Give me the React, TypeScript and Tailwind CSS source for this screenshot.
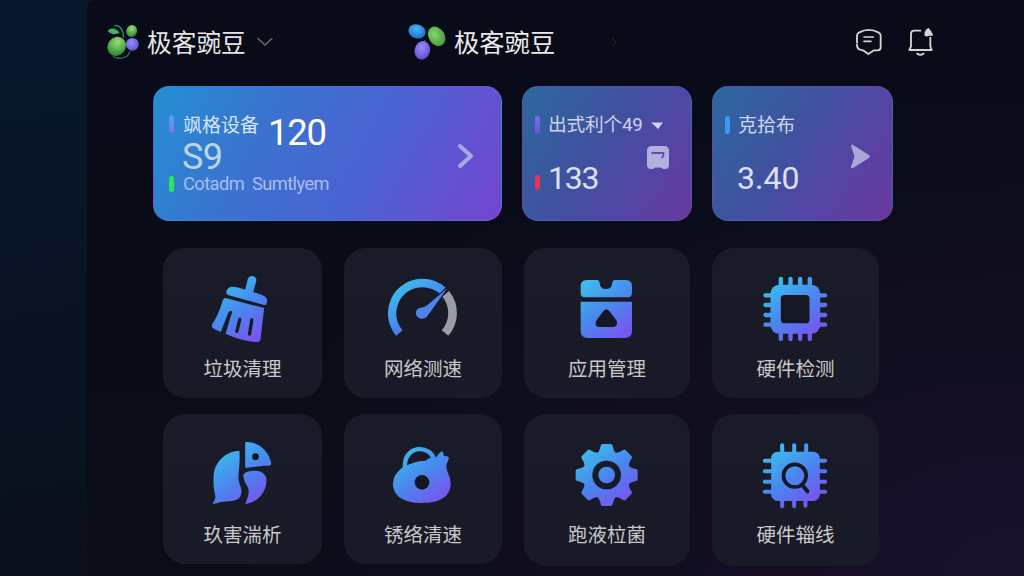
import type { ReactNode } from "react";

const CJK = "font-['Noto_Sans_CJK_SC',sans-serif]";
const NUM = "font-[Roboto,'Noto_Sans_CJK_SC',sans-serif]";

function BerryLogo() {
  return (
    <svg width="34" height="38" viewBox="51 38 102 114" fill="none">
      <defs>
        <radialGradient id="berry-green" cx="0.4" cy="0.3" r="0.75">
          <stop offset="0" stopColor="#9bdc7c" />
          <stop offset="0.5" stopColor="#5cb54e" />
          <stop offset="1" stopColor="#2d7a31" />
        </radialGradient>
        <radialGradient id="berry-violet" cx="0.4" cy="0.35" r="0.75">
          <stop offset="0" stopColor="#918fff" />
          <stop offset="1" stopColor="#5f4fd4" />
        </radialGradient>
      </defs>
      <path d="M76 45C92 44 102 56 104 82" stroke="#2c8f63" strokeWidth="4" />
      <path d="M72 138C92 150 121 142 122 122" stroke="#24705f" strokeWidth="4" />
      <path d="M56 62C62 50 84 52 92 68C79 74 64 72 56 62Z" fill="#3cb85c" />
      <ellipse cx="128" cy="62" rx="16" ry="18" transform="rotate(24 128 62)" fill="url(#berry-green)" />
      <ellipse cx="83" cy="108" rx="27" ry="30" transform="rotate(35 83 108)" fill="url(#berry-green)" />
      <ellipse cx="130" cy="102" rx="19" ry="19" fill="url(#berry-violet)" />
    </svg>
  );
}

function BeanLogo() {
  return (
    <svg width="40" height="38" viewBox="50 40 120 114" fill="none">
      <defs>
        <radialGradient id="bean-blue" cx="0.4" cy="0.35" r="0.75">
          <stop offset="0" stopColor="#4bb4fb" />
          <stop offset="1" stopColor="#156bc4" />
        </radialGradient>
        <radialGradient id="bean-green" cx="0.45" cy="0.35" r="0.75">
          <stop offset="0" stopColor="#8ad66e" />
          <stop offset="1" stopColor="#379338" />
        </radialGradient>
        <radialGradient id="bean-violet" cx="0.4" cy="0.35" r="0.75">
          <stop offset="0" stopColor="#9b8bff" />
          <stop offset="1" stopColor="#5547cf" />
        </radialGradient>
      </defs>
      <path d="M104 91L102 102" stroke="#2a5b78" strokeWidth="4" />
      <ellipse cx="80" cy="65" rx="26" ry="21" transform="rotate(18 80 65)" fill="url(#bean-blue)" />
      <ellipse cx="139" cy="80" rx="24" ry="31" transform="rotate(-32 139 80)" fill="url(#bean-green)" />
      <ellipse cx="96" cy="122" rx="23" ry="28" transform="rotate(14 96 122)" fill="url(#bean-violet)" />
    </svg>
  );
}

function MessageIcon() {
  return (
    <svg width="28" height="28" viewBox="77 54 84 84" fill="none" stroke="#d6d4d3" strokeWidth="5.5" strokeLinecap="round" strokeLinejoin="round">
      <path d="M83 98V77Q83 70 90 67Q118 52 147 67Q154 70 154 77V112Q154 121 145 121H134L117 132L103 122L90 118Q83 115 83 104" />
      <path d="M104 81H132M104 94H125" strokeWidth="5" />
    </svg>
  );
}

function BellIcon() {
  return (
    <svg width="28" height="30" viewBox="230 50 84 90" fill="none" stroke="#d6d4d3" strokeWidth="5.5" strokeLinecap="round" strokeLinejoin="round">
      <path d="M270 61H252Q242 61 242 71V108L237 119H304L300 108V82" />
      <path d="M261 130Q270 137 279 130" strokeWidth="6" />
      <path d="M294 55Q300 60 306 74L295 74L289 77L284 74Q284 62 294 55Z" fill="#d6d4d3" strokeWidth="4" />
    </svg>
  );
}

function ToolIcon({ id, x, y, children }: { id: string; x: number; y: number; children: ReactNode }) {
  return (
    <svg width="72" height="72" viewBox={`${x} ${y} 216 216`} fill={`url(#${id})`} className="shrink-0">
      <defs>
        <linearGradient id={id} gradientUnits="userSpaceOnUse" x1={x + 45} y1={y + 25} x2={x + 165} y2={y + 190}>
          <stop offset="0" stopColor="#3cbcec" />
          <stop offset="0.5" stopColor="#4a86ee" />
          <stop offset="1" stopColor="#7b52f0" />
        </linearGradient>
      </defs>
      {children}
    </svg>
  );
}

function BroomIcon() {
  return (
    <ToolIcon id="tool-broom" x={154.5} y={102}>
      <path d="M277 117Q280 107 291 108Q303 110 303 120L293 157Q321 163 331 172Q338 180 332 194Q326 197 318 193L220 166Q210 163 213 153Q217 141 229 140Q246 140 269 149Z" />
      <path d="M210 174L326 204L315 299Q313 307 302 306Q257 303 210 281L222 242Q228 222 230 217Q226 207 218 219L196 276L176 267Q165 261 171 251Q189 225 201 184Q204 174 210 174Z" />
      <path d="M253 238L244 274M289 240L282 282" stroke="#181b28" strokeWidth="10" strokeLinecap="round" />
    </ToolIcon>
  );
}

function GaugeIcon() {
  return (
    <ToolIcon id="tool-gauge" x={696} y={102}>
      <path d="M733 279A91 91 0 0 1 802 129A91 91 0 0 1 863 152" fill="none" stroke="url(#tool-gauge)" strokeWidth="25" />
      <path d="M872 161A91 91 0 0 1 870 279" fill="none" stroke="#9a9ca6" strokeWidth="26" />
      <path d="M877 145L815 231Q808 238 796 236Q781 231 783 216Q785 206 796 203Q808 203 818 195Z" stroke="#181b28" strokeWidth="6" paintOrder="stroke" />
    </ToolIcon>
  );
}

function AppBoxIcon() {
  return (
    <ToolIcon id="tool-box" x={168} y={102}>
      <path d="M216 120H247Q253 120 254 128Q255 147 273 147Q290 147 292 128Q293 120 299 120H332Q351 120 351 139V158Q351 172 337 172H211Q197 172 197 158V139Q197 120 216 120Z" />
      <path d="M197 185H351V273Q351 294 330 294H218Q197 294 197 273Z" />
      <path d="M266 212Q274 203 282 212L303 239Q310 250 302 258Q299 261 294 261H252Q244 261 242 254Q240 246 245 240Z" fill="#151824" />
    </ToolIcon>
  );
}

function ChipIcon() {
  return (
    <ToolIcon id="tool-chip" x={733.5} y={102}>
      <path
        d="M796 117V140M825 117V140M854 117V140M883 117V140M796 275V297M825 275V297M854 275V297M883 275V297M750 166H770M750 195H770M750 225H770M750 254H770M910 166H929M910 195H929M910 225H929M910 254H929"
        stroke="url(#tool-chip)"
        strokeWidth="13"
        strokeLinecap="round"
      />
      <rect x="765" y="134" width="149" height="147" rx="26" />
      <rect x="796" y="165" width="86" height="85" rx="11" fill="#151824" />
    </ToolIcon>
  );
}

function ParrotIcon() {
  return (
    <ToolIcon id="tool-parrot" x={154.5} y={105}>
      <path d="M252 138C215 137 175 168 174 218C173 252 179 267 180 277Q178 287 171 296Q182 297 194 291C215 287 244 294 255 273C264 253 251 242 249 222C249 196 254 180 252 138Z" />
      <path d="M271 111C310 110 342 140 347 175Q348 181 341 182C314 181 292 187 273 189Q269 189 269 184V115Q269 111 271 111Z" />
      <circle cx="300" cy="155" r="10" fill="#151824" />
      <path d="M264 217C260 203 277 197 300 197C323 197 335 213 333 230C330 266 304 292 269 297C277 276 285 260 275 243Q266 230 264 217Z" />
    </ToolIcon>
  );
}

function BagIcon() {
  return (
    <ToolIcon id="tool-bag" x={696} y={105}>
      <path d="M750 190V176A45 45 0 0 1 838 164" fill="none" stroke="url(#tool-bag)" strokeWidth="13" />
      <path d="M745 185C772 175 784 168 805 168Q815 168 818 163Q828 154 836 163Q845 158 851 147Q858 138 864 140Q865 148 867 153Q875 153 882 157Q880 168 874 180C874 203 887 211 887 238C885 281 845 294 803 294C751 294 714 276 714 236Q715 206 745 185Z" />
      <circle cx="801" cy="232" r="22" fill="#151824" />
    </ToolIcon>
  );
}

const GEAR_TEETH = [0, 45, 90, 135, 180, 225, 270, 315];

function GearIcon() {
  return (
    <ToolIcon id="tool-gear" x={168} y={105}>
      <mask id="gear-shape" maskUnits="userSpaceOnUse" x="168" y="105" width="216" height="216">
        <g fill="#fff">
          <circle cx="275" cy="210" r="72" />
          {GEAR_TEETH.map((deg) => (
            <path
              key={deg}
              d="M263 117H287Q292 117 293 122Q296 139 305 146L245 146Q254 139 257 122Q258 117 263 117Z"
              transform={`rotate(${deg} 275 210)`}
            />
          ))}
        </g>
        <circle cx="275" cy="210" r="34" fill="none" stroke="#000" strokeWidth="18" />
      </mask>
      <rect x="168" y="105" width="216" height="216" mask="url(#gear-shape)" />
    </ToolIcon>
  );
}

function ChipSearchIcon() {
  return (
    <ToolIcon id="tool-scan" x={733.5} y={105}>
      <path
        d="M800 121V145M836 121V145M872 121V145M800 285V304M836 285V304M870 285V302M748 167H770M748 199H770M748 230H770M748 260H770M910 167H929M910 199H929M910 230H929M910 260H929"
        stroke="url(#tool-scan)"
        strokeWidth="12"
        strokeLinecap="round"
      />
      <rect x="767" y="140" width="146" height="148" rx="20" />
      <circle cx="838" cy="212" r="34" stroke="#151824" strokeWidth="11" />
      <path d="M860 240L876 259" stroke="#151824" strokeWidth="12" strokeLinecap="round" />
    </ToolIcon>
  );
}

const TOOLS = [
  { label: "垃圾清理", icon: <BroomIcon />, height: "h-[150px]" },
  { label: "网络测速", icon: <GaugeIcon />, height: "h-[150px]" },
  { label: "应用管理", icon: <AppBoxIcon />, height: "h-[150px]" },
  { label: "硬件检测", icon: <ChipIcon />, height: "h-[150px]" },
  { label: "玖害湍析", icon: <ParrotIcon />, height: "h-[150px]" },
  { label: "锈络清速", icon: <BagIcon />, height: "h-[150px]" },
  { label: "跑液柆菌", icon: <GearIcon />, height: "h-[152px]" },
  { label: "硬件辎线", icon: <ChipSearchIcon />, height: "h-[152px]" },
];

function Header() {
  return (
    <header className="flex h-[84px] items-center pl-[19px]">
      <BerryLogo />
      <h1 className="ml-[7px] w-[99px] pb-[3px] whitespace-nowrap text-[24.7px] leading-9 text-[#e6e5e6]">极客豌豆</h1>
      <svg width="18" height="12" viewBox="0 0 18 12" fill="none" className="ml-[10px]">
        <path d="M2 2.5L9 9L16 2.5" stroke="#64666f" strokeWidth="1.6" strokeLinecap="round" />
      </svg>
      <div className="ml-[133px] flex items-center">
        <BeanLogo />
        <span className="ml-[7px] w-[101px] pb-[3px] whitespace-nowrap text-[25.3px] leading-9 text-[#ebeaec]">极客豌豆</span>
        <svg width="8" height="12" viewBox="0 0 8 12" fill="none" className="ml-[55px]">
          <path d="M2 2L6 6L2 10" stroke="#272a35" strokeWidth="1" />
        </svg>
      </div>
      <div className="ml-[237px] flex items-center gap-6">
        <MessageIcon />
        <BellIcon />
      </div>
    </header>
  );
}

function StatCards() {
  return (
    <section className="mt-[2px] flex gap-5 pl-[66px]">
      <div className="flex h-[135px] w-[349px] items-center justify-between rounded-2xl border border-white/5 bg-[linear-gradient(118deg,#238fd3_0%,#3b72cf_32%,#4b62d2_62%,#7544cf_100%)] pl-[15px] pr-[26px]">
        <div className="h-[83px]">
          <div className="flex h-6 items-center">
            <span className="h-[18px] w-[5px] rounded-full bg-linear-to-b from-[#42a5f8] to-[#7d70ee]" />
            <span className="ml-[9px] w-[77px] whitespace-nowrap text-[19px] leading-6 text-[#d9e6f8]">飒格设备</span>
            <span className={`mt-[18px] ml-[8px] text-[36.5px] leading-none font-[450] tracking-[-0.035em] text-white ${NUM}`}>120</span>
          </div>
          <div className={`ml-[13px] mt-[3px] text-[36px] leading-9 font-[450] tracking-[-0.02em] text-[#bcd3e4] ${NUM}`}>S9</div>
          <div className="-mt-px flex h-5 items-center">
            <span className="h-[16px] w-[5px] rounded-full bg-[#2ee45b]" />
            <span className={`ml-[9px] whitespace-pre text-[18.3px] leading-5 tracking-[-0.032em] text-[#a9bdee] ${NUM}`}>Cotadm  Sumtlyem</span>
          </div>
        </div>
        <svg width="18" height="26" viewBox="0 0 18 26" fill="none" className="mt-[5px]">
          <path d="M3 3L14 13L3 23" stroke="#a9a8ea" strokeWidth="4" strokeLinecap="round" strokeLinejoin="round" />
        </svg>
      </div>

      <div className="h-[135px] w-[170px] rounded-2xl border border-white/5 bg-[linear-gradient(125deg,#2c689f_0%,#41509f_45%,#4f48a5_65%,#6a389f_100%)] pt-[26px] pl-[12px] pr-[22px]">
        <div className="flex h-6 items-center">
          <span className="h-[18px] w-[5px] rounded-full bg-linear-to-b from-[#736bf0] to-[#6a55d6]" />
          <span className={`ml-[8px] w-[96px] whitespace-nowrap text-[18.7px] leading-6 tracking-[-0.01em] text-[#ccd3ea] ${NUM}`}>出式利个49</span>
          <svg width="12" height="7" viewBox="0 0 12 7" className="ml-[7px] shrink-0">
            <path d="M0 0.5H12L7 7L4 4Z" fill="#d3d3ee" />
          </svg>
        </div>
        <div className="flex items-start">
          <span className="mt-[38px] h-[15px] w-[5px] rounded-sm bg-[#ea3450]" />
          <span className={`mt-[23px] ml-[8px] text-[32px] leading-9 font-[450] tracking-[-0.04em] text-[#dde0f6] ${NUM}`}>133</span>
          <svg width="22" height="23" viewBox="0 0 22 23" fill="none" className="mt-[9px] ml-auto">
            <path d="M5 0H17Q22 0 22 5V19Q22 23 18 23Q15 23 14 21.5H8Q7 23 4 23Q0 23 0 19V5Q0 0 5 0Z" fill="#b3b0e0" />
            <path d="M4.5 7H16.5Q17 10 14.5 12" stroke="#5951a8" strokeWidth="1.8" />
          </svg>
        </div>
      </div>

      <div className="h-[135px] w-[181px] rounded-2xl border border-white/5 bg-[linear-gradient(125deg,#2c689f_0%,#41509f_45%,#5246a4_65%,#6a389f_100%)] pt-[26px] pl-[12px] pr-[22px]">
        <div className="flex h-6 items-center">
          <span className="h-[18px] w-[5px] rounded-full bg-[#379bf5]" />
          <span className="ml-[8px] pb-0.5 whitespace-nowrap text-[19px] leading-6 text-[#d0d7ec]">克拾布</span>
        </div>
        <div className="flex items-start justify-between">
          <span className={`mt-[23px] ml-[12px] text-[32px] leading-9 font-[450] text-[#dde0f6] ${NUM}`}>3.40</span>
          <svg width="20" height="25" viewBox="0 0 20 25" className="mt-[7px]">
            <path d="M1 2Q1 0 3 1L19 11Q20.500 12.500 19 14L3 24Q1 25 1 23L4.500 12.500Z" fill="#aaa6da" />
          </svg>
        </div>
      </div>
    </section>
  );
}

export default function App() {
  return (
    <div className={`h-[576px] w-[1024px] overflow-hidden bg-[linear-gradient(170deg,#07182d_0%,#0a1324_45%,#0a0f19_85%,#0a0e18_100%)] pl-[87px] ${CJK}`}>
      <main className="h-full rounded-tl-lg bg-[radial-gradient(ellipse_at_100%_100%,#1b112e_0%,#120e21_28%,transparent_60%),linear-gradient(#090c18,#0a0d18)]">
        <Header />
        <StatCards />
        <section className="mt-[27px] grid grid-cols-[159px_158px_166px_167px] items-start gap-x-[22px] gap-y-4 pl-[76px]">
          {TOOLS.map((tool) => (
            <div
              key={tool.label}
              className={`flex flex-col items-center rounded-[22px] bg-linear-to-b from-[#191c28] to-[#181b27] pt-[26px] ${tool.height}`}
            >
              {tool.icon}
              <span className="mt-2 whitespace-nowrap text-[19.5px] leading-7 text-[#c9c8ca]">{tool.label}</span>
            </div>
          ))}
        </section>
      </main>
    </div>
  );
}
